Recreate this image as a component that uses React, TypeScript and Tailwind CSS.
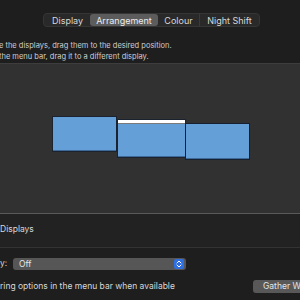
export default function App() {
  return (
    <div
      className="w-[300px] h-[300px] overflow-hidden bg-[#1e1e1e] text-[#d8d8d8] flex flex-col"
      style={{ fontFamily: 'Inter, "Noto Sans", sans-serif' }}
    >
      {/* Tabs */}
      <div className="pt-[13px] pl-[43px] h-[40px]">
        <div className="flex items-center w-[217px] h-[14px] rounded-[4px] bg-[#292929] border border-[#353535] text-[9px] leading-none">
          <div className="w-[46px] pl-[8px]">Display</div>
          <div className="w-[68px] h-[12px] rounded-[3px] bg-[#5c5c5c] flex items-center justify-center text-[#ececec]">
            Arrangement
          </div>
          <div className="w-[42px] h-full flex items-center justify-center border-r border-[#3a3a3a] my-[3px]">Colour</div>
          <div className="flex-1 text-center">Night Shift</div>
        </div>
      </div>

      {/* Description */}
      <div className="h-[23px] text-[7.5px] leading-[11px] text-[#cfcfcf] -ml-[1px]">
        <div>e the displays, drag them to the desired position.</div>
        <div>the menu bar, drag it to a different display.</div>
      </div>

      {/* Arrangement canvas */}
      <div className="relative h-[151px] bg-[#313131] border-t border-[#3d3d3d] border-b border-b-[#5a5a5a]">
        <div className="absolute left-[52px] top-[52px] w-[65px] h-[36px] bg-[#659fd7] border border-[#1c2330] shadow-[inset_0_-1px_0_#3d6a99]" />
        <div className="absolute left-[117px] top-[55px] w-[69px] h-[39px] bg-[#659fd7] border border-[#1c2330] shadow-[inset_0_-1px_0_#3d6a99]">
          <div className="h-[3px] bg-white" />
          <div className="h-[1px] bg-[#7a7a7a]" />
        </div>
        <div className="absolute left-[185px] top-[59px] w-[65px] h-[37px] bg-[#659fd7] border border-[#16202e] shadow-[inset_0_-1px_0_#3d6a99]" />
      </div>

      {/* Mirror displays */}
      <div className="h-[34px] flex items-start pt-[9px] text-[8.5px] bg-[#222222] border-b border-[#333333]">
        <span>Displays</span>
      </div>

      {/* AirPlay dropdown */}
      <div className="h-[22px] flex items-end text-[8.5px]">
        <span className="w-[13px]">y:</span>
        <div className="w-[173px] h-[12px] rounded-[3px] bg-[#565656] flex items-center pl-[6px] pr-[2px]">
          <span className="flex-1 text-[#e6e6e6]">Off</span>
          <div className="w-[10px] h-[10px] rounded-[2px] bg-[#2f6fe0] flex items-center justify-center">
            <svg width="6" height="8" viewBox="0 0 6 8" fill="none">
              <path d="M1 3L3 1L5 3M1 5L3 7L5 5" stroke="white" strokeWidth="1" strokeLinecap="round" strokeLinejoin="round" />
            </svg>
          </div>
        </div>
      </div>

      {/* Bottom row */}
      <div className="flex items-center justify-between pt-[10px] text-[8.5px]">
        <span>ring options in the menu bar when available</span>
        <div className="w-[50px] h-[13px] rounded-[3px] bg-[#585858] pl-[10px] flex items-center whitespace-nowrap text-[#e6e6e6] -mr-[3px]">
          Gather Windows
        </div>
      </div>
    </div>
  );
}
